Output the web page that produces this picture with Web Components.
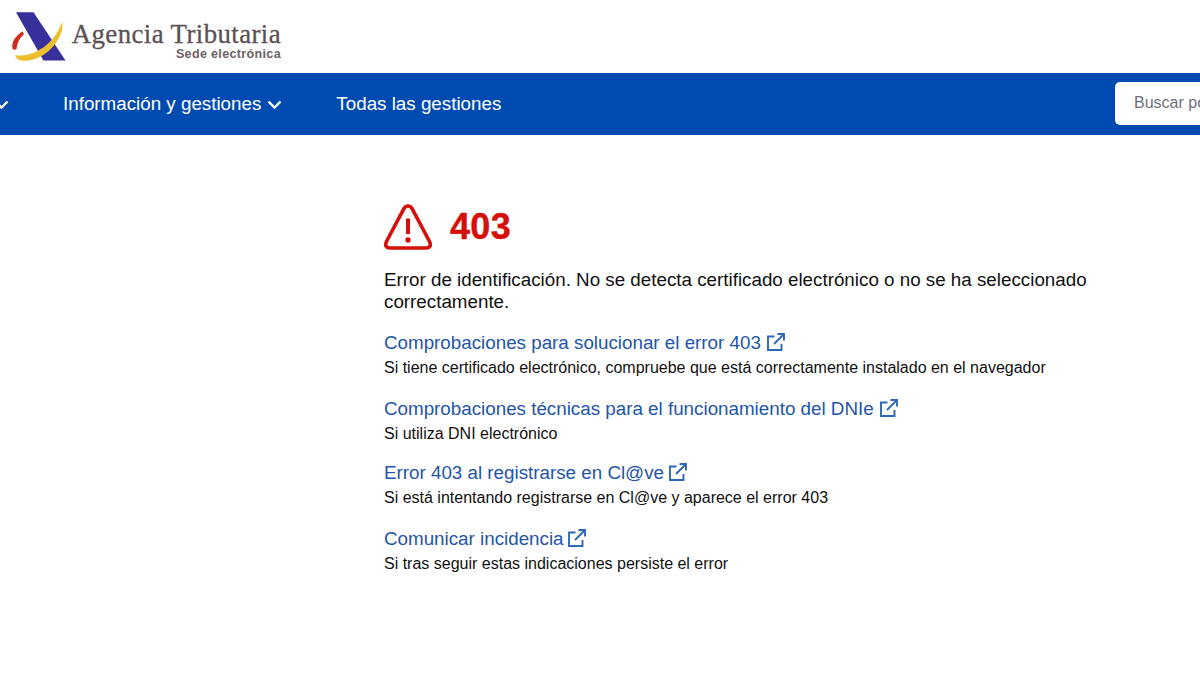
<!DOCTYPE html>
<html lang="es"><head><meta charset="utf-8"><title>403</title>
<style>
html,body{margin:0;padding:0;background:#fff;overflow:hidden;height:675px}
body{font-family:"Liberation Sans",Arial,sans-serif;color:#111}
</style></head><body>
<site-header></site-header>
<site-nav>
  <nav-item class="first" chevron></nav-item>
  <nav-item chevron>Información y gestiones</nav-item>
  <nav-item>Todas las gestiones</nav-item>
</site-nav>
<error-page code="403">
  <p slot="message">Error de identificación. No se detecta certificado electrónico o no se ha seleccionado correctamente.</p>
  <help-link label="Comprobaciones para solucionar el error 403">Si tiene certificado electrónico, compruebe que está correctamente instalado en el navegador</help-link>
  <help-link class="tight" label="Comprobaciones técnicas para el funcionamiento del DNIe">Si utiliza DNI electrónico</help-link>
  <help-link class="near" label="Error 403 al registrarse en Cl@ve">Si está intentando registrarse en Cl@ve y aparece el error 403</help-link>
  <help-link class="near" label="Comunicar incidencia">Si tras seguir estas indicaciones persiste el error</help-link>
</error-page>
<script>
function def(name, html, init){
  customElements.define(name, class extends HTMLElement{
    connectedCallback(){
      if(this.shadowRoot) return;
      const r=this.attachShadow({mode:'open'});
      r.innerHTML=html;
      if(init) init(this,r);
    }
  });
}
def('site-header',`<style>
:host{display:flex;height:73px;box-sizing:border-box;padding:12px 0 0 11px;background:#fff}
.mark{width:56px;height:50px;flex:none}
.txt{margin-left:4px;width:210px;display:flex;flex-direction:column;align-items:flex-end}
.a{font:26.800px/30px "Liberation Serif",serif;color:#5c5154;letter-spacing:.42px;white-space:nowrap;margin-top:7px;-webkit-text-stroke:.3px #5c5154}
.b{font:bold 12.500px/14px "Liberation Sans",sans-serif;color:#6b6065;letter-spacing:.36px;white-space:nowrap;margin-top:-2px}
</style>
<svg class="mark" viewBox="0 0 56 50">
<path d="M5 0.300H22.500L54.500 48.500H32.500Z" fill="#37309a"/>
<path d="M1.500 36.500C0 30 5 23.500 11.500 19.500L13 22C8.500 26 6 31 5.500 37C4 38 2.500 38 1.500 36.500Z" fill="#cf2a1c"/>
<path d="M4 43C18 46 42 36 51 10C55 25 33 52 10 48.500C7 48 5 46 4 43Z" fill="#ecc02c"/>
</svg>
<div class="txt"><span class="a">Agencia Tributaria</span><span class="b">Sede electrónica</span></div>`);
def('site-nav',`<style>
:host{display:flex;align-items:center;height:62px;background:#004bb1;overflow:hidden;position:relative}
.items{display:flex;align-items:center;flex:none;width:1115px}
.search{flex:none;width:200px;height:43px;box-sizing:border-box;background:#fff;border-radius:5px;padding:0 0 0 19px;font:16px/41px "Liberation Sans",sans-serif;color:#70707a;white-space:nowrap;margin-top:-1px}
</style><div class="items"><slot></slot></div><div class="search">Buscar por</div>`);
def('nav-item',`<style>
:host{display:inline-flex;align-items:center;color:#fff;font:18.800px/22px "Liberation Sans",sans-serif;white-space:nowrap;margin-right:54px;margin-top:-1px}
:host(.first){margin-left:-12.500px;margin-right:54px;width:21.500px}
svg{width:15px;height:10px;margin-left:6px;flex:none;margin-top:3px}
</style><slot></slot><svg viewBox="0 0 15 10" fill="none" stroke="#fff" stroke-width="2.400"><path d="M1.500 1.500L7.500 7.500L13.500 1.500"/></svg>`,
(el,r)=>{ if(!el.hasAttribute('chevron')) r.querySelector('svg').remove(); });
def('error-page',`<style>
:host{display:block;padding:69px 0 0 384px;width:720px}
.head{display:flex;align-items:center;height:46px;gap:18px}
.code{font:bold 36px/46px "Liberation Sans",sans-serif;color:#d50f0a;letter-spacing:.3px;-webkit-text-stroke:.4px #d50f0a}
svg{width:48px;height:46px;flex:none}
::slotted(p){margin:19px 0 0;font:18.800px/22px "Liberation Sans",sans-serif;color:#111}
.links{display:block;margin-top:19px}
</style>
<div class="head"><svg viewBox="0 0 48 46" fill="none" stroke="#d50f0a"><path d="M24 2Q26.500 2 28 4.500L45.500 37.500Q48 43.500 42.500 44H5.500Q0 43.500 2.500 37.500L20 4.500Q21.500 2 24 2Z" stroke-width="3.600"/><path d="M24 14.500V30" stroke-width="4"/><circle cx="24" cy="36" r="2.700" fill="#d50f0a" stroke="none"/></svg><span class="code"></span></div>
<slot name="message"></slot><div class="links"><slot></slot></div>`,
(el,r)=>{ r.querySelector('.code').textContent=el.getAttribute('code'); });
def('help-link',`<style>
:host{display:block;margin-bottom:23px;height:43px}
:host(.tight){margin-bottom:21px}
a{display:inline-flex;align-items:center;font:18.800px/22px "Liberation Sans",sans-serif;color:#2355a8;text-decoration:none;white-space:nowrap}
svg{width:18px;height:18px;margin-left:6px;flex:none;margin-top:-3px}
:host(.near) svg{margin-left:4.500px}
.sub{font:16px/21px "Liberation Sans",sans-serif;color:#111;white-space:nowrap;margin-top:3px}
</style>
<a href="#"><span class="l"></span><svg viewBox="0 0 18 18" fill="none" stroke="#2f68b8" stroke-width="1.900"><path d="M7.500 3.500H1V17H14.500V11"/><path d="M7 11L16.500 1.500M10.500 1H17V7.500"/></svg></a>
<div class="sub"><slot></slot></div>`,
(el,r)=>{ r.querySelector('.l').textContent=el.getAttribute('label'); });
</script>
</body></html>
